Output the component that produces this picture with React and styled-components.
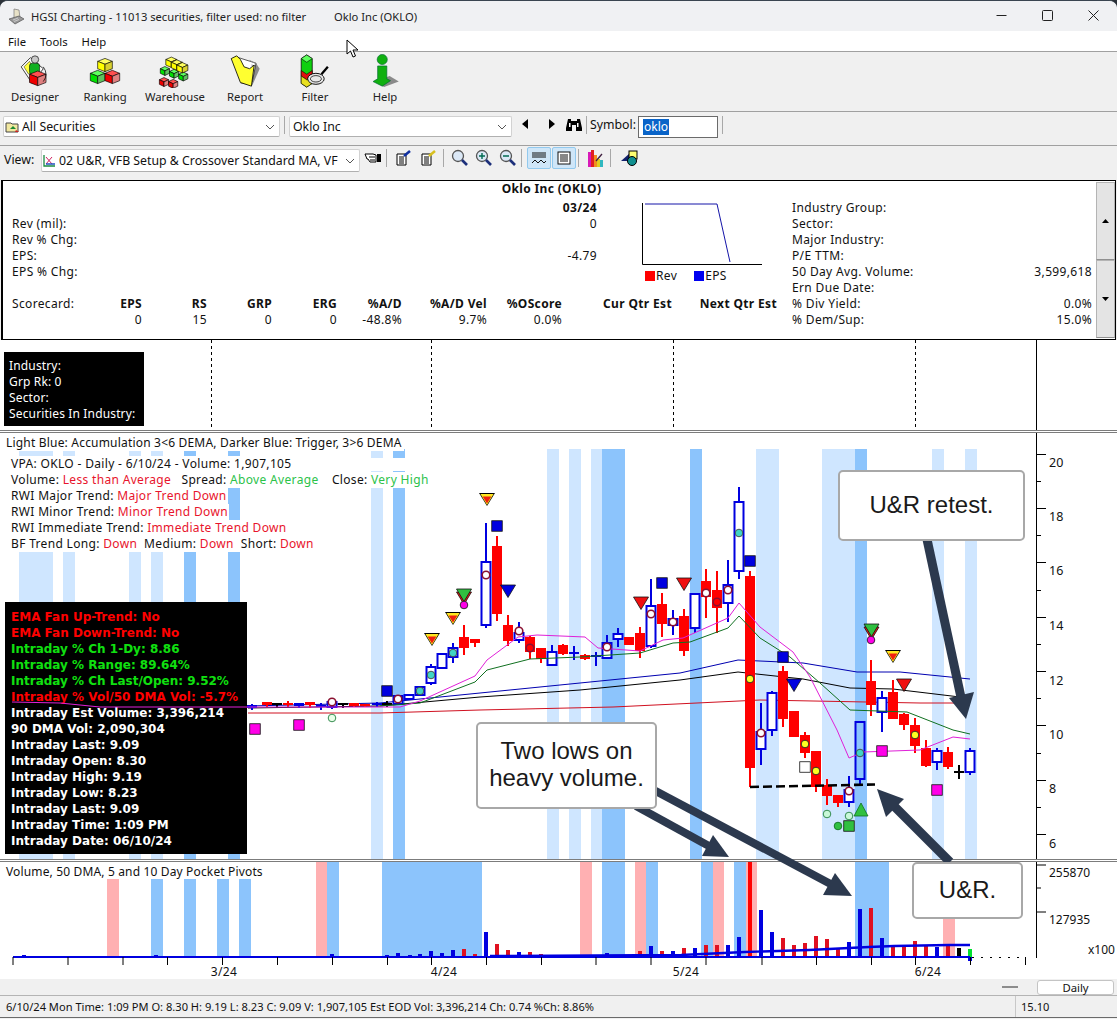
import styled, { createGlobalStyle } from 'styled-components'

const UI_FONT = '"Noto Sans", "Liberation Sans", sans-serif'

const GlobalStyle = createGlobalStyle`
  html, body { margin: 0; padding: 0; background: #2b3138; }
  body { width: 1117px; height: 1019px; overflow: hidden; }
  * { box-sizing: border-box; }
`

const Window = styled.div`
  position: relative;
  width: 1117px;
  height: 1019px;
  background: #f0f0f0;
  border-top: 1px solid #3a4550;
  border-radius: 8px 8px 0 0;
  overflow: hidden;
  font-family: ${UI_FONT};
  font-size: 12px;
  color: #111;
`

const TitleBar = styled.div`
  height: 30px;
  display: flex;
  align-items: center;
  background: #f0f1f3;
  padding-left: 8px;
  font-size: 11.2px;
  color: #222;
`
const TitleText = styled.span`
  margin-left: 6px;
  width: 303px;
  white-space: nowrap;
`
const WindowControls = styled.div`
  margin: -2px 1px 0 auto;
  display: flex;
`
const WindowButton = styled.div`
  width: 46px;
  height: 30px;
  display: flex;
  align-items: center;
  justify-content: center;
`

const MenuBar = styled.div`
  height: 21px;
  display: flex;
  align-items: center;
  gap: 14px;
  padding-left: 8px;
  background: #fff;
  font-size: 11.3px;
  border-bottom: 1px solid #a0a0a0;
`

const IconToolbar = styled.div`
  height: 60px;
  display: flex;
  border-bottom: 1px solid #a0a0a0;
`
const ToolButton = styled.div`
  width: 70px;
  display: flex;
  flex-direction: column;
  align-items: center;
  padding-top: 2px;
  font-size: 11.3px;
  color: #222;
  svg { display: block; height: 34px; }
  span { margin-top: 1px; line-height: 16px; }
`

const SelectorBar = styled.div`
  height: 34px;
  display: flex;
  align-items: center;
  padding: 0 0 4px 3px;
  border-bottom: 1px solid #a0a0a0;
`
const Combo = styled.div`
  width: ${p => p.$w}px;
  height: ${p => p.$h || 22}px;
  display: flex;
  align-items: center;
  gap: 1px;
  padding-left: 1px;
  background: #fff;
  border: 1px solid #d2d2d2;
  border-bottom-color: #b0b0b0;
  border-radius: 2px;
  font-size: 12.3px;
  white-space: nowrap;
  overflow: hidden;
`
const ComboText = styled.span`
  flex: 1;
  overflow: hidden;
  padding-left: ${p => p.$pad || 0}px;
`
const Chevron = styled.svg`
  flex: none;
  width: 10px;
  height: 6px;
  margin: 0 4px 0 3px;
`
const Divider = styled.div`
  width: 1px;
  height: ${p => p.$h || 18}px;
  margin: ${p => (p.$up ? -4 : 0)}px ${p => p.$m ?? 4}px 0 ${p => p.$ml ?? p.$m ?? 4}px;
  background: #a8a8a8;
`
const SmallIcon = styled.div`
  width: ${p => p.$w || 24}px;
  height: 20px;
  margin-top: ${p => (p.$up ? -6 : 0)}px;
  display: flex;
  align-items: center;
  justify-content: center;
`
const SymbolLabel = styled.span`
  margin: -4px 2px 0 1px;
  font-size: 12.3px;
`
const SymbolInput = styled.div`
  width: 80px;
  height: 22px;
  padding: 2px 4px;
  background: #fff;
  border: 1px solid #6b6b6b;
  line-height: 16px;
  span { display: inline-block; background: #0a64c8; color: #fff; padding: 0 1px; }
`

const ViewBar = styled.div`
  height: 34px;
  display: flex;
  align-items: center;
  padding: 0 0 5px 4px;
`
const ViewLabel = styled.span`
  width: 37px;
  margin-top: -2px;
  font-size: 12.3px;
`
const ViewTools = styled.div`
  display: flex;
  align-items: center;
  margin-top: -5px;
`
const ToggleButton = styled.div`
  width: 24px;
  height: 22px;
  margin-right: 1px;
  display: flex;
  align-items: center;
  justify-content: center;
  background: #cfe6f8;
  border: 1px solid #92c9ee;
  border-radius: 2px;
`

const InfoPanel = styled.div`
  height: 160px;
  margin: 0 1px;
  display: flex;
  background: #fff;
  border: 1px solid #000;
  border-left-width: 2px;
  font-size: 12px;
  letter-spacing: 0.35px;
`
const InfoContent = styled.div`
  flex: 1;
  display: flex;
  flex-direction: column;
  padding-top: 1px;
`
const InfoTitle = styled.div`
  height: 18px;
  line-height: 14px;
  text-align: center;
  font-weight: 700;
  padding-left: 4px;
`
const InfoBody = styled.div`
  display: flex;
`
const InfoLeft = styled.div`
  width: 788px;
`
const InfoTop = styled.div`
  height: 96px;
  display: flex;
`
const QuarterTable = styled.div`
  width: 594px;
  padding-left: 9px;
`
const Row = styled.div`
  height: 16px;
  line-height: 16px;
  display: flex;
  justify-content: space-between;
  white-space: nowrap;
  font-weight: ${p => (p.$bold ? 700 : 400)};
`
const MiniChart = styled.div`
  margin: 3px 0 0 45px;
  width: 122px;
  svg { display: block; }
`
const MiniLegend = styled.div`
  height: 14px;
  margin-top: 4px;
  display: flex;
  align-items: center;
  padding-left: 3px;
  gap: 1px;
  line-height: 14px;
`
const Swatch = styled.i`
  width: 10px;
  height: 10px;
  background: ${p => p.$c};
  margin-left: ${p => p.$ml || 0}px;
`
const Scorecard = styled.div`
  display: grid;
  grid-template-columns: 66px 64px 65px 65px 65px 65px 85px 75px 110px 105px;
  padding-left: 9px;
  line-height: 16px;
  white-space: nowrap;
`
const ScoreCell = styled.div`
  text-align: ${p => (p.$left ? 'left' : 'right')};
  font-weight: ${p => (p.$bold ? 700 : 400)};
`
const InfoRight = styled.div`
  width: 300px;
  margin-left: 1px;
`
const ScrollColumn = styled.div`
  width: 19px;
  margin: 1px 0;
  display: flex;
  flex-direction: column;
`
const ScrollButton = styled.div`
  flex: 1;
  display: flex;
  align-items: center;
  justify-content: center;
  background: #e4e4e4;
  border: 1px solid #b4b4b4;
  border-bottom-color: #909090;
`

const ChartStack = styled.div`
  position: relative;
  height: 639px;
  background: #fff;
`
const Pane = styled.div`
  position: relative;
  height: ${p => p.$h}px;
  background: #fff;
  border-top: ${p => (p.$sep ? '3px double #7c7c7c' : 'none')};
  svg { display: block; }
`
const IndustryBox = styled.div`
  position: absolute;
  left: 4px;
  top: 12px;
  width: 140px;
  height: 74px;
  padding: 6px 0 0 5px;
  background: #000;
  color: #fff;
  line-height: 16px;
  font-size: 12px;
  letter-spacing: 0.15px;
`
const LegendBlock = styled.div`
  position: absolute;
  left: 0;
  top: 2px;
  display: flex;
  flex-direction: column;
  align-items: flex-start;
`
const AccumLine = styled.div`
  width: 404px;
  height: 16px;
  padding-left: 6px;
  line-height: 15px;
  background: #fff;
  letter-spacing: 0.19px;
  white-space: nowrap;
`
const TrendLine = styled.div`
  height: 16px;
  padding: 0 1px 0 11px;
  line-height: 16px;
  background: #fff;
  letter-spacing: 0.33px;
  white-space: nowrap;
`
const TrendGap = styled.div`
  height: 5px;
`
const Neg = styled.span`
  color: #e8142c;
`
const Pos = styled.span`
  color: #2cc24a;
`
const CloseLabel = styled.span`
  margin-left: 3px;
`
const StatBox = styled.div`
  position: absolute;
  left: 5px;
  top: 169px;
  width: 242px;
  height: 252px;
  padding: 7px 0 0 6px;
  background: #000;
  font-family: "DejaVu Sans", sans-serif;
  font-size: 12px;
  font-weight: 700;
  line-height: 16px;
  white-space: nowrap;
`
const StatLine = styled.div`
  color: ${p => p.$c || '#fff'};
`
const VolumeCaption = styled.div`
  position: absolute;
  left: 0;
  top: 2px;
  width: 265px;
  height: 15px;
  padding-left: 6px;
  line-height: 15px;
  background: #fff;
  letter-spacing: 0.15px;
  white-space: nowrap;
`
const Annotations = styled.svg`
  position: absolute;
  left: 0;
  top: 0;
  pointer-events: none;
`
const Callout = styled.div`
  position: absolute;
  left: ${p => p.$x}px;
  top: ${p => p.$y}px;
  width: ${p => p.$w}px;
  height: ${p => p.$h}px;
  display: flex;
  align-items: center;
  justify-content: center;
  padding-bottom: 3px;
  text-align: center;
  background: #fff;
  border: 2px solid #a8a8a8;
  border-radius: 5px;
  font-family: "Liberation Sans", Arial, sans-serif;
  font-size: 24px;
  line-height: 27px;
  color: #1a1a1a;
`

const ControlStrip = styled.div`
  height: 16px;
  display: flex;
  align-items: center;
  justify-content: flex-end;
  padding-right: 3px;
`
const ZoomDash = styled.div`
  width: 16px;
  height: 2px;
  margin-right: 19px;
  background: #8c8c8c;
`
const TabButton = styled.div`
  width: 77px;
  height: 15px;
  text-align: center;
  font-size: 11.3px;
  line-height: 13px;
  background: #fff;
  border: 1px solid #c4c4c4;
  border-radius: 3px;
`
const StatusBar = styled.div`
  height: 23px;
  display: flex;
  align-items: center;
  font-size: 11.1px;
  border-top: 1px solid #b4b4b4;
  border-bottom: 1px solid #6a6a6a;
  white-space: nowrap;
`
const StatusMain = styled.div`
  width: 1015px;
  padding-left: 6px;
`
const StatusSide = styled.div`
  height: 100%;
  padding-left: 5px;
  line-height: 21px;
  border-left: 1px solid #c8c8c8;
`
const Pointer = styled.svg`
  position: absolute;
  left: 346px;
  top: 38px;
`

// ---- toolbar drawings ----

const Cube = ({ x, y, s, top, left, right }) => {
  const h = s * 0.55
  return (
    <g stroke="#000" strokeWidth="0.7" strokeLinejoin="round">
      <polygon points={`${x},${y} ${x + s},${y - h / 2 - 1} ${x + 2 * s},${y} ${x + s},${y + h / 2 + 1}`} fill={top} />
      <polygon points={`${x},${y} ${x + s},${y + h / 2 + 1} ${x + s},${y + h / 2 + 1 + s} ${x},${y + s}`} fill={left} />
      <polygon points={`${x + 2 * s},${y} ${x + s},${y + h / 2 + 1} ${x + s},${y + h / 2 + 1 + s} ${x + 2 * s},${y + s}`} fill={right} />
    </g>
  )
}
const Y = { top: '#ffff60', left: '#ffff00', right: '#d8d030' }
const G = { top: '#60ff60', left: '#00e000', right: '#60c060' }
const R = { top: '#ff5050', left: '#f00000', right: '#e08080' }

const DesignerIcon = () => (
  <svg viewBox="0 0 34 37" width="34">
    <polygon points="2,14 12,4 26,16 14,32" fill="#fff" stroke="#000" strokeWidth="0.8" />
    <polygon points="5,14 11,8 16,16 10,22" fill="#ffff40" stroke="#000" strokeWidth="0.5" />
    <rect x="11" y="10" width="11" height="12" rx="3" fill="#10b020" stroke="#000" strokeWidth="0.6" />
    <circle cx="17" cy="6" r="4" fill="#c8c8c8" stroke="#000" strokeWidth="0.7" />
    <Cube x={11} y={22} s={9} {...R} />
    <path d="M26 14 q6 8 0 16" fill="none" stroke="#000" strokeWidth="0.8" />
  </svg>
)
const RankingIcon = () => (
  <svg viewBox="0 0 34 37" width="34">
    <Cube x={1} y={21} s={8} {...G} />
    <Cube x={17} y={21} s={8} {...R} />
    <Cube x={9} y={8} s={8} {...Y} />
  </svg>
)
const WarehouseIcon = () => (
  <svg viewBox="0 0 36 37" width="36">
    <Cube x={1} y={28} s={5} {...R} />
    <Cube x={11} y={30} s={5} {...R} />
    <Cube x={2} y={16} s={5} {...G} />
    <Cube x={12} y={19} s={5} {...G} />
    <Cube x={22} y={22} s={5} {...G} />
    <Cube x={8} y={6} s={6} {...Y} />
    <Cube x={14} y={9} s={6} {...Y} />
    <Cube x={20} y={12} s={6} {...Y} />
  </svg>
)
const ReportIcon = () => (
  <svg viewBox="0 0 34 37" width="34">
    <polygon points="12,32 25,34 33,16 29,10" fill="#8c8c8c" />
    <polygon points="7,3 29,10 25,30 15,32" fill="#fff" stroke="#000" strokeWidth="0.7" />
    <path d="M22 7l6 3M24 12l4 1M23 16l4 1" stroke="#888" strokeWidth="1" />
    <polygon points="2,5 8,2 12,6 16,14 22,16 27,12 24,35 12,31" fill="#ffff30" stroke="#000" strokeWidth="0.9" />
  </svg>
)
const FilterIcon = () => (
  <svg viewBox="0 0 34 37" width="34">
    <polygon points="2,5 8,1 14,5 14,32 8,36 2,32" fill="#10d010" stroke="#000" strokeWidth="0.8" />
    <polygon points="2,5 8,1 14,5 8,9" fill="#60ff60" stroke="#000" strokeWidth="0.6" />
    <polygon points="2,18 8,22 14,18 14,24 8,28 2,24" fill="#e01010" stroke="#000" strokeWidth="0.6" />
    <polygon points="2,24 8,28 14,24 14,32 8,36 2,32" fill="#e8e020" stroke="#000" strokeWidth="0.6" />
    <line x1="24" y1="22" x2="31" y2="14" stroke="#000" strokeWidth="2.5" />
    <ellipse cx="18" cy="27" rx="9" ry="6" fill="#e8e8e8" stroke="#000" strokeWidth="1" />
    <ellipse cx="18" cy="27" rx="6" ry="3.5" fill="none" stroke="#333" strokeWidth="1" />
  </svg>
)
const HelpIcon = () => (
  <svg viewBox="0 0 34 37" width="34">
    <polygon points="6,30 22,24 32,30 16,36" fill="#8a8a8a" />
    <circle cx="14" cy="6" r="5.5" fill="#10b010" stroke="#063" strokeWidth="0.7" />
    <path d="M9 13 h10 v14 l4 2 l-9 6 l-10 -5 l5 -3 z" fill="#10b010" stroke="#063" strokeWidth="0.7" />
  </svg>
)

const ChevronDown = () => (
  <Chevron viewBox="0 0 10 6"><path d="M1 1 L5 5 L9 1" fill="none" stroke="#555" strokeWidth="1" /></Chevron>
)

const Binoculars = () => (
  <svg width="16" height="14" viewBox="0 0 16 14">
    <path d="M2 2h3v2h6V2h3l2 9v3H10V8H6v6H0v-3z" fill="#000" />
    <rect x="3" y="6" width="1.5" height="4" fill="#fff" />
    <rect x="11" y="6" width="1.5" height="4" fill="#fff" />
  </svg>
)
const HandIcon = () => (
  <svg width="18" height="12" viewBox="0 0 18 12">
    <path d="M1 2h8l3 1v7H6L4 7H3z" fill="#fff" stroke="#000" />
    <path d="M5 5h6M6 8h5" stroke="#000" />
    <rect x="13" y="2" width="4" height="8" fill="#000" />
  </svg>
)
const NoteIcon = ({ accent }) => (
  <svg width="16" height="16" viewBox="0 0 16 16">
    <path d="M2 4h9v11H2z" fill="#fff" stroke="#000" />
    <path d="M4 7h5M4 9h5M4 11h5M4 13h5" stroke="#000" strokeWidth="1" />
    <path d="M9 6 L15 1" stroke={accent} strokeWidth="2.5" />
  </svg>
)
const Magnifier = ({ mark }) => (
  <svg width="18" height="18" viewBox="0 0 18 18">
    <circle cx="7" cy="7" r="5.5" fill="#dbe8f6" stroke="#555" strokeWidth="1.3" />
    <line x1="11" y1="11" x2="16" y2="16" stroke="#1c2f7a" strokeWidth="2.6" />
    {mark !== '' && <path d={mark === '+' ? 'M4 7h6M7 4v6' : 'M4 7h6'} stroke="#006a50" strokeWidth="1.4" />}
  </svg>
)
const LinesIcon = () => (
  <svg width="16" height="13" viewBox="0 0 16 13">
    <path d="M1 1h14M1 3h14M1 5h14" stroke="#111" strokeWidth="1" />
    <path d="M1 11 l3 -3 l3 3 l3 -3 l3 3 l2 -2" fill="none" stroke="#111" strokeWidth="1" />
  </svg>
)
const ListIcon = () => (
  <svg width="14" height="14" viewBox="0 0 14 14">
    <rect x="1" y="1" width="12" height="12" fill="#fff" stroke="#111" />
    <path d="M3 4h8M3 6h8M3 8h8M3 10h8" stroke="#111" strokeWidth="1" />
  </svg>
)
const BarsIcon = () => (
  <svg width="17" height="18" viewBox="0 0 17 18">
    <rect x="1" y="3" width="3" height="15" fill="#d81ab8" />
    <rect x="4" y="1" width="3" height="17" fill="#e02020" />
    <rect x="7" y="6" width="3" height="12" fill="#f09020" />
    <rect x="10" y="10" width="3" height="8" fill="#e0d020" />
    <rect x="13" y="11" width="3" height="7" fill="#30b8c0" />
    <line x1="9" y1="12" x2="15" y2="5" stroke="#402040" strokeWidth="1.3" />
  </svg>
)
const ShapesIcon = () => (
  <svg width="18" height="16" viewBox="0 0 18 16">
    <polygon points="0,11 9,3 9,11" fill="#12206c" />
    <rect x="8" y="1" width="8" height="8" fill="#ffff70" stroke="#000" />
    <circle cx="11" cy="11" r="4.5" fill="#109090" stroke="#000" />
  </svg>
)
const ChartFileIcon = () => (
  <svg width="13" height="13" viewBox="0 0 13 13">
    <path d="M1 1v11h11" fill="none" stroke="#1a8a40" strokeWidth="1.3" />
    <path d="M3 3l6 7M9 3l-6 7" stroke="#d02060" strokeWidth="1" />
    <path d="M3 10h9" stroke="#2050c0" strokeWidth="1.3" />
  </svg>
)
const FolderIcon = () => (
  <svg width="16" height="12" viewBox="0 0 16 12">
    <path d="M1 2h5l1 1h6v8H1z" fill="#f2e8a0" stroke="#444" />
    <path d="M5 8l3-3 3 3z" fill="#1a8a30" />
    <path d="M11 9l3 2H10z" fill="#d02020" />
  </svg>
)
const AppIcon = () => (
  <svg width="17" height="17" viewBox="0 0 17 17">
    <path d="M6 1l5 1 1 8-6 1z" fill="#e8e2c8" stroke="#777" strokeWidth="0.7" />
    <path d="M1 11l10-3 5 3-9 5z" fill="#9a9a9a" stroke="#555" strokeWidth="0.7" />
    <path d="M5 12l5-2M6 13.5l5-2" stroke="#e0e0e0" strokeWidth="0.7" />
  </svg>
)

// ---- chart data, in page coordinates ----

const LIGHT = '#cfe6ff'
const DARK = '#8cc4fc'
const PINK = '#ffb0b2'
const RED = '#ff0000'
const BLUE = '#0000e0'
const MAGENTA = '#ff00e8'

const mainBands = [
  [19, 53, LIGHT], [63, 75, LIGHT], [129, 141, LIGHT], [151, 163, LIGHT], [184, 196, DARK], [228, 240, DARK],
  [371, 383, LIGHT], [393, 405, DARK], [547, 559, LIGHT], [569, 581, LIGHT], [591, 602, LIGHT], [602, 625, DARK],
  [690, 702, DARK], [756, 779, LIGHT], [822, 855, LIGHT], [855, 867, DARK], [932, 944, LIGHT], [965, 977, LIGHT],
]

// x, high, low, body top, body bottom, kind (r red, b hollow blue, c clear hollow, k black)
const candles = [
  [252, 704, 710, 705, 708, 'B'], [267, 702, 707, 702, 705, 'r'], [277, 703, 708, 703, 705, 'k'], [288, 701, 707, 703, 705, 'r'],
  [299, 703, 708, 703, 706, 'B'], [310, 702, 708, 702, 705, 'r'], [321, 703, 710, 705, 707, 'B'], [332, 699, 709, 702, 707, 'b'],
  [343, 703, 708, 703, 705, 'k'], [354, 703, 707, 703, 706, 'r'], [365, 704, 707, 704, 706, 'r'], [377, 702, 707, 703, 705, 'B'],
  [387, 701, 707, 703, 705, 'k'], [398, 696, 705, 696, 704, 'b'], [409, 695, 699, 695, 699, 'b'], [420, 687, 695, 687, 695, 'b'],
  [431, 664, 685, 667, 683, 'b'], [442, 654, 668, 654, 668, 'b'], [453, 643, 663, 648, 657, 'b'], [464, 625, 655, 637, 648, 'r'],
  [475, 639, 647, 639, 643, 'r'], [486, 523, 628, 562, 625, 'b'], [497, 536, 621, 546, 614, 'r'], [508, 615, 646, 625, 641, 'r'],
  [519, 622, 643, 633, 640, 'b'], [530, 636, 659, 637, 652, 'r'], [541, 648, 663, 648, 659, 'r'], [552, 645, 665, 652, 665, 'b'],
  [563, 644, 655, 645, 654, 'r'], [574, 646, 660, 652, 654, 'B'], [585, 654, 660, 655, 659, 'r'], [596, 652, 666, 655, 657, 'B'],
  [607, 635, 658, 643, 658, 'b'], [618, 628, 647, 634, 639, 'b'], [629, 637, 645, 637, 645, 'r'], [640, 627, 658, 633, 651, 'r'],
  [651, 579, 648, 606, 646, 'b'], [662, 593, 637, 604, 624, 'r'], [673, 610, 635, 619, 625, 'b'], [684, 609, 656, 616, 651, 'r'],
  [695, 594, 633, 594, 628, 'b'], [706, 569, 618, 581, 597, 'r'], [717, 571, 633, 590, 608, 'r'], [728, 560, 622, 585, 603, 'b'],
  [739, 487, 579, 502, 571, 'b'], [750, 571, 787, 576, 768, 'r'], [761, 703, 765, 732, 749, 'b'], [772, 691, 736, 693, 730, 'b'],
  [783, 666, 727, 671, 719, 'r'], [794, 711, 737, 711, 737, 'r'], [805, 732, 758, 735, 753, 'r'], [816, 751, 792, 751, 787, 'r'],
  [827, 779, 805, 785, 796, 'r'], [838, 795, 807, 795, 803, 'r'], [849, 776, 807, 790, 802, 'b'], [860, 722, 785, 722, 779, 'c'],
  [871, 660, 716, 681, 705, 'r'], [882, 691, 732, 698, 712, 'b'], [893, 680, 719, 692, 719, 'r'], [904, 713, 730, 714, 725, 'r'],
  [915, 718, 753, 725, 746, 'r'], [926, 740, 767, 748, 766, 'r'], [937, 748, 770, 751, 762, 'b'], [948, 747, 769, 752, 767, 'r'],
  [959, 765, 779, 771, 773, 'k'], [970, 748, 775, 751, 772, 'b'],
]

const magentaLine = '248,707 400,707 420,701 475,676 487,660 518,637 537,635 585,637 598,648 640,651 663,640 683,638 728,618 739,603 760,627 793,652 810,677 837,730 849,758 863,752 920,750 953,737 970,739'
const magentaOverBox = '12,702 60,703 100,707 248,707'
const greenLine = '380,706 420,703 475,682 487,670 530,659 580,657 640,653 673,643 690,642 728,628 739,616 760,638 790,657 820,683 850,710 907,712 953,730 970,734'
const blueLine = '248,706 380,703 480,693 580,683 680,673 738,660 803,663 857,672 900,672 970,679'
const blackLine = '248,708 380,706 480,697 580,690 680,680 738,672 803,679 850,688 893,689 960,697'
const redLine = '248,713 380,713 480,710 613,707 760,700 920,703 970,703'

const triangles = [
  [432, 633, 'ry'], [453, 612, 'ry'], [487, 493, 'ry'], [893, 650, 'ry'],
  [641, 597, 'r'], [684, 578, 'r'], [904, 679, 'r'],
  [508, 585, 'b'], [794, 679, 'b'],
  [464, 592, 'r'], [464, 589, 'g'], [871.5, 627, 'r'], [871.5, 624, 'g'],
]
const squares = [
  [497, 526, BLUE, 10.5], [662, 583, BLUE, 10.5], [750, 561, BLUE, 10.5], [783, 657, BLUE, 10.5], [387, 691, BLUE, 10.5],
  [882, 751, MAGENTA, 10.5], [937, 790, MAGENTA, 10.5], [255, 729, MAGENTA, 10.5], [299, 725, MAGENTA, 10.5],
  [805, 767, '#fff', 10.5], [849, 826, '#30c040', 10.5],
]
const TEAL = '#40d4c4'
const YEL = '#ffff20'
const RING = '#8a1030'
const dots = [
  [398, 699, '#fff', RING], [332, 702, '#fff', RING], [420, 691, TEAL, '#444'], [431, 675, TEAL, '#444'], [453, 653, TEAL, '#444'],
  [486, 575, '#fff', RING], [519, 631, '#fff', RING], [530, 648, RED, RING], [607, 647, '#fff', RING],
  [651, 614, '#fff', RING], [673, 622, '#fff', RING], [706, 593, '#fff', RING], [717, 602, RED, RING],
  [728, 590, '#fff', RING], [739, 533, TEAL, '#444'], [750, 679, YEL, '#222'], [761, 733, '#fff', RING],
  [805, 744, YEL, '#222'], [816, 771, YEL, '#222'], [849, 791, '#fff', RING], [860, 753, TEAL, '#444'], [915, 735, YEL, '#222'],
  [464, 605, MAGENTA, '#222'], [871, 640, MAGENTA, '#222'], [827, 814, '#c8f8d8', '#228040'], [849, 816, '#c8f8d8', '#228040'],
  [838, 826, '#30c040', '#107020'], [332, 718, '#e8ffe8', '#228040'],
]

const majorTicks = [454, 508, 562, 617, 671, 725, 780, 834]
const minorTicks = [481, 535, 590, 644, 698, 753, 807]
const priceLabels = [[462, '20'], [516, '18'], [570, '16'], [625, '14'], [680, '12'], [734, '10'], [788, '8'], [843, '6']]

const volBands = [
  [107, 119, PINK, 879], [151, 163, DARK, 879], [184, 196, DARK, 879], [217, 229, DARK, 879], [239, 251, DARK, 879],
  [316, 327, PINK, 862], [327, 339, DARK, 862], [382, 482, DARK, 862], [580, 592, PINK, 862], [602, 625, DARK, 862],
  [635, 646, PINK, 862], [646, 658, DARK, 862], [701, 713, DARK, 862], [713, 724, PINK, 862], [734, 746, DARK, 862],
  [746, 757, PINK, 862], [855, 889, DARK, 862], [943, 955, PINK, 862],
]
// x, height, colour
const volBars = [
  [24, 2, 'b'], [156, 2, 'b'], [332, 3, 'b'], [387, 2, 'b'], [398, 4, 'b'], [410, 2, 'b'], [420, 3, 'b'], [431, 6, 'b'], [442, 4, 'b'],
  [453, 7, 'b'], [464, 8, 'r'], [475, 3, 'r'], [486, 25, 'b'], [497, 13, 'r'], [508, 7, 'r'], [519, 5, 'b'], [530, 5, 'r'], [541, 3, 'r'],
  [563, 2, 'r'], [574, 2, 'b'], [585, 2, 'r'], [607, 4, 'b'], [630, 2, 'r'], [640, 6, 'r'], [651, 11, 'b'], [662, 6, 'r'], [673, 6, 'b'],
  [684, 9, 'r'], [695, 9, 'b'], [706, 12, 'r'], [717, 12, 'r'], [728, 12, 'b'], [739, 20, 'b'], [750, 95, 'R'], [761, 47, 'b'], [772, 25, 'b'],
  [783, 19, 'r'], [794, 12, 'r'], [805, 14, 'r'], [816, 21, 'r'], [827, 18, 'r'], [838, 9, 'r'], [849, 15, 'b'], [860, 48, 'b'], [871, 49, 'r'],
  [882, 19, 'b'], [893, 12, 'r'], [904, 12, 'r'], [915, 16, 'r'], [926, 12, 'r'], [937, 10, 'b'], [948, 12, 'r'], [959, 9, 'k'],
]
const timeTicks = [13, 68, 123, 167.5, 222.5, 277.5, 332.5, 387.5, 431.5, 486.5, 541.5, 596, 651, 706, 762, 816.5, 871.5, 915.5, 970.5, 1025.5]
const monthLabels = [[224, '3/24'], [444, '4/24'], [686, '5/24'], [928, '6/24']]

const statLines = [
  ['EMA Fan Up-Trend: No', '#ff0000'], ['EMA Fan Down-Trend: No', '#ff0000'],
  ['Intraday % Ch 1-Dy: 8.86', '#10e010'], ['Intraday % Range: 89.64%', '#10e010'],
  ['Intraday % Ch Last/Open: 9.52%', '#10e010'], ['Intraday % Vol/50 DMA Vol: -5.7%', '#ff0000'],
  ['Intraday Est Volume: 3,396,214'], ['90 DMA Vol: 2,090,304'], ['Intraday Last: 9.09'], ['Intraday Open: 8.30'],
  ['Intraday High: 9.19'], ['Intraday Low: 8.23'], ['Intraday Last: 9.09'], ['Intraday Time: 1:09 PM'], ['Intraday Date: 06/10/24'],
]

const scoreHead = ['Scorecard:', 'EPS', 'RS', 'GRP', 'ERG', '%A/D', '%A/D Vel', '%OScore', 'Cur Qtr Est', 'Next Qtr Est']
const scoreVals = ['', '0', '15', '0', '0', '-48.8%', '9.7%', '0.0%', '', '']
const rightRows = [
  ['Industry Group:'], ['Sector:'], ['Major Industry:'], ['P/E TTM:'], ['50 Day Avg. Volume:', '3,599,618'],
  ['Ern Due Date:'], ['% Div Yield:', '0.0%'], ['% Dem/Sup:', '15.0%'],
]

const triPoints = (x, y, w, h) => `${x - w},${y} ${x + w},${y} ${x},${y + h}`

const Triangle = ({ x, y, kind }) => {
  if (kind === 'ry') {
    return (
      <g>
        <polygon points={triPoints(x, y, 8, 13)} fill="#000" />
        <polygon points={triPoints(x, y + 1, 6.6, 11)} fill="#ffe820" />
        <polygon points={triPoints(x, y + 3.5, 4.4, 7)} fill="#f02010" />
      </g>
    )
  }
  const fill = { r: '#f01010', b: BLUE, g: '#30c040' }[kind]
  return <polygon points={triPoints(x, y, 7.5, 12.5)} fill={fill} stroke="#111" strokeWidth="0.8" />
}

const Candle = ({ c }) => {
  const [x, hi, lo, top, bot, kind] = c
  if (kind === 'r' || kind === 'k' || kind === 'B') {
    const col = kind === 'r' ? RED : kind === 'k' ? '#000' : BLUE
    return (
      <g>
        <line x1={x} x2={x} y1={hi} y2={lo} stroke={col} strokeWidth="2" />
        <rect x={x - 5} y={top} width="10" height={bot - top} fill={col} />
      </g>
    )
  }
  return (
    <g>
      <line x1={x} x2={x} y1={hi} y2={top} stroke={BLUE} strokeWidth="2" />
      <line x1={x} x2={x} y1={bot} y2={lo} stroke={BLUE} strokeWidth="2" />
      <rect x={x - 4.5} y={top} width="9" height={bot - top} fill={kind === 'c' ? 'none' : '#fff'} stroke={BLUE} strokeWidth="2" />
    </g>
  )
}

const StripChart = () => (
  <svg width="1117" height="90" viewBox="0 340 1117 90">
    {[211.5, 431.5, 673.5, 915.5].map(x => (
      <line key={x} x1={x} x2={x} y1="340" y2="430" stroke="#000" strokeDasharray="3 3" />
    ))}
    <line x1="1036.5" x2="1036.5" y1="340" y2="430" stroke="#000" />
  </svg>
)

const PriceChart = () => (
  <svg width="1117" height="426" viewBox="0 433 1117 426">
    {mainBands.map(([a, b, c]) => <rect key={a} x={a} y="449" width={b - a} height="410" fill={c} />)}
    <rect x="294" y="458" width="137" height="13" fill="#fff" />
    <polyline points={redLine} fill="none" stroke="#d01020" strokeWidth="1" />
    <polyline points={blackLine} fill="none" stroke="#000" strokeWidth="1" />
    <polyline points={blueLine} fill="none" stroke="#0000b0" strokeWidth="1" />
    {candles.map(c => <Candle key={c[0]} c={c} />)}
    <polyline points={greenLine} fill="none" stroke="#107020" strokeWidth="1" />
    <polyline points={magentaLine} fill="none" stroke="#e020d8" strokeWidth="1" />
    {triangles.map(([x, y, k], i) => <Triangle key={i} x={x} y={y} kind={k} />)}
    {squares.map(([x, y, c, s]) => (
      <rect key={`${x}-${y}`} x={x - s / 2} y={y - s / 2} width={s} height={s} fill={c} stroke="#111" strokeWidth="0.8" />
    ))}
    {dots.map(([x, y, f, s]) => (
      <circle key={`${x}-${y}`} cx={x} cy={y} r="3.8" fill={f} stroke={s} strokeWidth={s === RING ? 1.6 : 0.9} />
    ))}
    <polygon points="861,803 868,816 854,816" fill="#30c040" stroke="#107020" strokeWidth="0.8" />
    <line x1="750" y1="787" x2="875" y2="784.5" stroke="#000" strokeWidth="2.6" strokeDasharray="9 4" />
    <line x1="1036.5" x2="1036.5" y1="433" y2="859" stroke="#000" />
    {majorTicks.map(y => <line key={y} x1="1036" x2="1046" y1={y + 0.5} y2={y + 0.5} stroke="#000" />)}
    {minorTicks.map(y => <line key={y} x1="1036" x2="1041" y1={y + 0.5} y2={y + 0.5} stroke="#000" />)}
    {priceLabels.map(([y, t]) => (
      <text key={t} x="1049" y={y + 5} fontFamily={UI_FONT} fontSize="12.5" fill="#111">{t}</text>
    ))}
  </svg>
)

const VolumeChart = () => (
  <svg width="1117" height="117" viewBox="0 862 1117 117">
    {volBands.map(([a, b, c, top]) => <rect key={a} x={a} y={top} width={b - a} height={957 - top} fill={c} />)}
    {volBars.map(([x, h, k]) => (
      <rect key={x} x={x - 2} y={957 - h} width="4" height={h}
        fill={{ b: BLUE, r: '#e01020', R: RED, k: '#000' }[k]} />
    ))}
    <rect x="968" y="949" width="4" height="8" fill="#00e030" />
    <rect x="968" y="957" width="4" height="4" fill={BLUE} />
    <line x1="13" x2="970" y1="957" y2="957" stroke={BLUE} strokeWidth="2" />
    <polyline points="490,956 681,955 745,952 809,950 869,947 894,946 949,945 970,945" fill="none" stroke={BLUE} strokeWidth="2.4" />
    <line x1="972" x2="1026" y1="957.5" y2="957.5" stroke="#000" strokeDasharray="2 7" />
    {timeTicks.map(x => <line key={x} x1={x} x2={x} y1="957" y2="965" stroke="#000" />)}
    {monthLabels.map(([x, t]) => (
      <text key={t} x={x} y="976" textAnchor="middle" fontFamily={UI_FONT} fontSize="12" letterSpacing="0.3" fill="#111">{t}</text>
    ))}
    <line x1="1036.5" x2="1036.5" y1="862" y2="958" stroke="#000" />
    <line x1="1036" x2="1046" y1="865" y2="865" stroke="#000" />
    <line x1="1036" x2="1041" y1="888" y2="888" stroke="#000" />
    <line x1="1036" x2="1046" y1="912" y2="912" stroke="#000" />
    <text x="1049" y="877" fontFamily={UI_FONT} fontSize="12" fill="#111">255870</text>
    <text x="1049" y="924" fontFamily={UI_FONT} fontSize="12" fill="#111">127935</text>
    <text x="1088" y="954" fontFamily={UI_FONT} fontSize="12" fill="#111">x100</text>
  </svg>
)

const ARROW = '#2c394e'

const App = () => (
  <>
    <GlobalStyle />
    <Window>
      <TitleBar>
        <AppIcon />
        <TitleText>HGSI Charting - 11013 securities, filter used: no filter</TitleText>
        <span>Oklo Inc (OKLO)</span>
        <WindowControls>
          <WindowButton>
            <svg width="11" height="11" viewBox="0 0 11 11"><path d="M0.5 5.5h10" stroke="#222" /></svg>
          </WindowButton>
          <WindowButton>
            <svg width="11" height="11" viewBox="0 0 11 11"><rect x="0.5" y="0.5" width="10" height="10" rx="1" fill="none" stroke="#222" /></svg>
          </WindowButton>
          <WindowButton>
            <svg width="11" height="11" viewBox="0 0 11 11"><path d="M0.5 0.5l10 10M10.5 0.5l-10 10" stroke="#222" /></svg>
          </WindowButton>
        </WindowControls>
      </TitleBar>
      <MenuBar>
        <span>File</span>
        <span>Tools</span>
        <span>Help</span>
      </MenuBar>
      <IconToolbar>
        <ToolButton><DesignerIcon /><span>Designer</span></ToolButton>
        <ToolButton><RankingIcon /><span>Ranking</span></ToolButton>
        <ToolButton><WarehouseIcon /><span>Warehouse</span></ToolButton>
        <ToolButton><ReportIcon /><span>Report</span></ToolButton>
        <ToolButton><FilterIcon /><span>Filter</span></ToolButton>
        <ToolButton><HelpIcon /><span>Help</span></ToolButton>
      </IconToolbar>
      <SelectorBar>
        <Combo $w={277} $h={21}><FolderIcon /><ComboText>All Securities</ComboText><ChevronDown /></Combo>
        <Divider $m={4} $up />
        <Combo $w={223} $h={21}><ComboText $pad={2}>Oklo Inc</ComboText><ChevronDown /></Combo>
        <SmallIcon $w={27} $up style={{ marginLeft: -1 }}>
          <svg width="6" height="10" viewBox="0 0 6 10"><polygon points="6,0 6,10 0,5" fill="#000" /></svg>
        </SmallIcon>
        <SmallIcon $w={27} $up>
          <svg width="6" height="10" viewBox="0 0 6 10"><polygon points="0,0 0,10 6,5" fill="#000" /></svg>
        </SmallIcon>
        <SmallIcon $w={18} $up><Binoculars /></SmallIcon>
        <Divider $m={2} $ml={3} $up />
        <SymbolLabel>Symbol:</SymbolLabel>
        <SymbolInput><span>oklo</span></SymbolInput>
        <Divider $m={4} $up />
      </SelectorBar>
      <ViewBar>
        <ViewLabel>View:</ViewLabel>
        <Combo $w={319} $h={23}><ChartFileIcon /><ComboText $pad={2}>02 U&amp;R, VFB Setup &amp; Crossover Standard MA, VF</ComboText><ChevronDown /></Combo>
        <ViewTools>
          <SmallIcon $w={26}><HandIcon /></SmallIcon>
          <Divider $m={4} $ml={0} />
          <SmallIcon $w={24}><NoteIcon accent="#1030a0" /></SmallIcon>
          <SmallIcon $w={26}><NoteIcon accent="#d8c020" /></SmallIcon>
          <Divider $m={4} $ml={2} />
          <SmallIcon $w={24}><Magnifier mark="" /></SmallIcon>
          <SmallIcon $w={24}><Magnifier mark="+" /></SmallIcon>
          <SmallIcon $w={24}><Magnifier mark="-" /></SmallIcon>
          <Divider $m={5} $ml={1} />
          <ToggleButton><LinesIcon /></ToggleButton>
          <ToggleButton><ListIcon /></ToggleButton>
          <Divider $m={6} $ml={1} />
          <SmallIcon $w={20}><BarsIcon /></SmallIcon>
          <Divider $m={8} $ml={5} />
          <SmallIcon $w={22}><ShapesIcon /></SmallIcon>
        </ViewTools>
      </ViewBar>
      <InfoPanel>
        <InfoContent>
          <InfoTitle>Oklo Inc (OKLO)</InfoTitle>
          <InfoBody>
            <InfoLeft>
              <InfoTop>
                <QuarterTable>
                  <Row $bold><span /><span>03/24</span></Row>
                  <Row><span>Rev (mil):</span><span>0</span></Row>
                  <Row><span>Rev % Chg:</span></Row>
                  <Row><span>EPS:</span><span>-4.79</span></Row>
                  <Row><span>EPS % Chg:</span></Row>
                </QuarterTable>
                <MiniChart>
                  <svg width="122" height="62" viewBox="0 0 122 62">
                    <path d="M0.5 0V61.5H120" fill="none" stroke="#000" />
                    <polyline points="3,1 75,1 88,59" fill="none" stroke="#1414a8" />
                  </svg>
                  <MiniLegend>
                    <Swatch $c="#ff0000" /><span>Rev</span>
                    <Swatch $c="#0000f0" $ml={16} /><span>EPS</span>
                  </MiniLegend>
                </MiniChart>
              </InfoTop>
              <Scorecard>
                {scoreHead.map((t, i) => <ScoreCell key={t} $left={i === 0} $bold={i > 0}>{t}</ScoreCell>)}
                {scoreVals.map((t, i) => <ScoreCell key={i}>{t}</ScoreCell>)}
              </Scorecard>
            </InfoLeft>
            <InfoRight>
              {rightRows.map(([a, b]) => <Row key={a}><span>{a}</span>{b && <span>{b}</span>}</Row>)}
            </InfoRight>
          </InfoBody>
        </InfoContent>
        <ScrollColumn>
          <ScrollButton>
            <svg width="7" height="4" viewBox="0 0 7 4"><polygon points="3.5,0 7,4 0,4" fill="#000" /></svg>
          </ScrollButton>
          <ScrollButton>
            <svg width="7" height="4" viewBox="0 0 7 4"><polygon points="0,0 7,0 3.5,4" fill="#000" /></svg>
          </ScrollButton>
        </ScrollColumn>
      </InfoPanel>
      <ChartStack>
        <Pane $h={90}>
          <StripChart />
          <IndustryBox>
            <div>Industry:</div>
            <div>Grp Rk: 0</div>
            <div>Sector:</div>
            <div>Securities In Industry:</div>
          </IndustryBox>
        </Pane>
        <Pane $h={429} $sep>
          <PriceChart />
          <LegendBlock>
            <AccumLine>Light Blue: Accumulation 3&lt;6 DEMA, Darker Blue: Trigger, 3&gt;6 DEMA</AccumLine>
            <TrendGap />
            <TrendLine>VPA: OKLO - Daily - 6/10/24 - Volume: 1,907,105</TrendLine>
            <TrendLine>Volume: <Neg>Less than Average</Neg>&nbsp;&nbsp; Spread: <Pos>Above Average</Pos>&nbsp;&nbsp; <CloseLabel>Close:</CloseLabel> <Pos>Very High</Pos></TrendLine>
            <TrendLine>RWI Major Trend: <Neg>Major Trend Down</Neg></TrendLine>
            <TrendLine>RWI Minor Trend: <Neg>Minor Trend Down</Neg></TrendLine>
            <TrendLine>RWI Immediate Trend: <Neg>Immediate Trend Down</Neg></TrendLine>
            <TrendLine>BF Trend Long: <Neg>Down</Neg>&nbsp; Medium: <Neg>Down</Neg>&nbsp; Short: <Neg>Down</Neg></TrendLine>
          </LegendBlock>
          <StatBox>
            {statLines.map(([t, c]) => <StatLine key={t + (c || '')} $c={c}>{t}</StatLine>)}
          </StatBox>
        </Pane>
        <Pane $h={120} $sep>
          <VolumeChart />
          <VolumeCaption>Volume, 50 DMA, 5 and 10 Day Pocket Pivots</VolumeCaption>
        </Pane>
        <Annotations width="1117" height="639" viewBox="0 340 1117 639">
          <polyline points={magentaOverBox} fill="none" stroke="#e020d8" strokeWidth="1" />
          <line x1="925" y1="530" x2="962" y2="702" stroke={ARROW} strokeWidth="9" />
          <polygon points="966,719 949,698 974,692" fill={ARROW} />
          <line x1="950" y1="862" x2="886" y2="798" stroke={ARROW} strokeWidth="9" />
          <polygon points="877,789 904,799 886,817" fill={ARROW} />
          <line x1="636" y1="806" x2="718" y2="851" stroke={ARROW} strokeWidth="8" />
          <polygon points="729,857 713,835 702,856" fill={ARROW} />
          <line x1="650" y1="788" x2="840" y2="889" stroke={ARROW} strokeWidth="8" />
          <polygon points="852,896 835,873 823,895" fill={ARROW} />
        </Annotations>
        <Callout $x={838} $y={130} $w={187} $h={71}>U&amp;R retest.</Callout>
        <Callout $x={476} $y={382} $w={181} $h={87}>Two lows on<br />heavy volume.</Callout>
        <Callout $x={912} $y={522} $w={111} $h={57}>U&amp;R.</Callout>
      </ChartStack>
      <ControlStrip>
        <ZoomDash />
        <TabButton>Daily</TabButton>
      </ControlStrip>
      <StatusBar>
        <StatusMain>6/10/24 Mon Time: 1:09 PM O: 8.30 H: 9.19 L: 8.23 C: 9.09 V: 1,907,105 Est EOD Vol: 3,396,214 Ch: 0.74 %Ch: 8.86%</StatusMain>
        <StatusSide>15.10</StatusSide>
      </StatusBar>
      <Pointer width="14" height="20" viewBox="0 0 14 20">
        <path d="M1 1 L1 15 L4.5 12 L7 18 L9.5 17 L7 11 L12 11 Z" fill="#fff" stroke="#000" strokeWidth="1" />
      </Pointer>
    </Window>
  </>
)

export default App
